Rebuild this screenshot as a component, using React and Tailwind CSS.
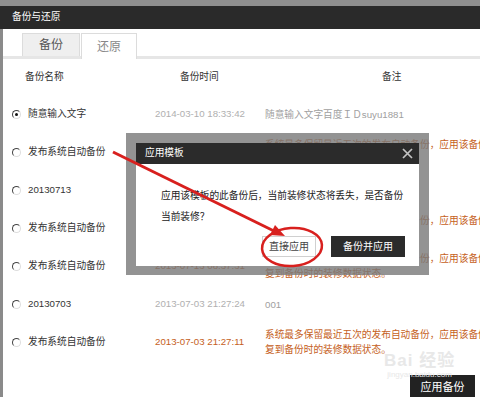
const rows = [
  {
    name: "随意输入文字",
    checked: true,
    time: "2014-03-10 18:33:42",
    tone: "gray",
    note: ["随意输入文字百度ＩＤsuyu1881"],
  },
  {
    name: "发布系统自动备份",
    time: "2013-07-20 09:12:45",
    tone: "orange",
    note: ["系统最多保留最近五次的发布自动备份，应用该备份将恢", "复到备份时的装修数据状态。"],
  },
  { name: "20130713", time: "2013-07-13 10:21:08", tone: "gray", note: ["0713"] },
  {
    name: "发布系统自动备份",
    time: "2013-07-15 08:40:02",
    tone: "orange",
    note: ["系统最多保留最近五次的发布自动备份，应用该备份将恢", "复到备份时的装修数据状态。"],
  },
  {
    name: "发布系统自动备份",
    time: "2013-07-13 08:37:31",
    tone: "orange",
    note: ["系统最多保留最近五次的发布自动备份，应用该备份将恢", "复到备份时的装修数据状态。"],
  },
  { name: "20130703", time: "2013-07-03 21:27:24", tone: "gray", note: ["001"] },
  {
    name: "发布系统自动备份",
    time: "2013-07-03 21:27:11",
    tone: "orange",
    note: ["系统最多保留最近五次的发布自动备份，应用该备份将恢", "复到备份时的装修数据状态。"],
  },
];

function Radio({ checked }) {
  return (
    <span className="w-[9px] h-[9px] shrink-0 rounded-full border border-t-[#444] border-l-[#444] border-r-[#ddd] border-b-[#ddd] bg-white flex items-center justify-center">
      {checked && <span className="w-[3px] h-[3px] rounded-full bg-[#111]" />}
    </span>
  );
}

function Row({ row }) {
  const orange = row.tone === "orange";
  return (
    <div className="h-[38px] flex items-center pl-[9px]">
      <Radio checked={row.checked} />
      <div className="w-[127px] ml-[7px] shrink-0 text-[#333] whitespace-nowrap">{row.name}</div>
      <div className={`w-[110px] shrink-0 whitespace-nowrap ${orange ? "text-[#c5601c]" : "text-[#b0b0b0]"}`}>
        {row.time}
      </div>
      <div className={`shrink-0 leading-[15px] whitespace-nowrap ${orange ? "text-[#c5601c]" : "text-[#a0a0a0]"}`}>
        {row.note.map((l, i) => (
          <div key={i}>{l}</div>
        ))}
      </div>
    </div>
  );
}

export default function App() {
  return (
    <div className="relative w-[480px] h-[397px] overflow-hidden bg-white text-[9.7px] font-['Liberation_Sans','Noto_Sans_CJK_SC',sans-serif]">
      <div className="h-[6px] bg-[#8f8f8f]" />
      <div className="h-[23px] bg-[#2a2a2a] flex items-center pl-[12px] text-white">备份与还原</div>

      <div className="flex">
        <div className="w-[3px] shrink-0 bg-[#8a8a8a]" />
        <div className="flex-1 min-w-0">
          {/* tabs */}
          <div className="h-[30px] flex items-end pl-[19px] border-b-[3px] border-[#e6e6e6]">
            <div className="w-[58px] h-[23px] bg-[#efefef] border border-b-0 border-[#dcdcdc] flex items-center justify-center text-[12px] text-[#555]">
              备份
            </div>
            <div className="w-[56px] h-[26px] ml-[1px] -mb-[3px] bg-white border border-b-0 border-[#dcdcdc] flex items-center justify-center text-[12px] text-[#888]">
              还原
            </div>
          </div>

          {/* column headers */}
          <div className="h-[36px] flex items-center pl-[22px] text-[#333]">
            <div className="w-[127px] shrink-0">备份名称</div>
            <div className="w-[110px] shrink-0 pl-[28px]">备份时间</div>
            <div className="pl-[120px]">备注</div>
          </div>

          {rows.map((r, i) => (
            <Row key={i} row={r} />
          ))}

          <div className="flex justify-end gap-[5px] mt-[14px] -mr-[60px]">
            <button className="w-[65px] h-[24px] shrink-0 bg-[#222] text-white text-[11px] flex items-center justify-center">
              应用备份
            </button>
            <button className="w-[60px] h-[24px] shrink-0 bg-white border border-[#ccc] text-[#333] text-[11px]">
              取消
            </button>
          </div>
        </div>
      </div>

      {/* watermark */}
      <div className="absolute left-[384px] top-[352px] flex flex-col items-center text-[#e8e8e8] pointer-events-none">
        <div className="text-[17px] font-bold leading-[18px] tracking-[1px]">Bai 经验</div>
        <div className="text-[8px] leading-[10px]">jingyan.baidu.com</div>
      </div>

      {/* modal */}
      <div className="absolute left-[126px] top-[133px] w-[303px] h-[142px] bg-[rgba(120,120,120,0.8)] pt-[10px] pl-[10px] pr-[10px] pb-[9px]">
        <div className="bg-white h-full flex flex-col">
          <div className="h-[21px] bg-[#2b2b2b] flex items-center justify-between pl-[9px] pr-[6px] text-white">
            <span>应用模板</span>
            <svg width="11" height="11" viewBox="0 0 11 11">
              <path d="M1 1L10 10M10 1L1 10" stroke="#c4c4c4" strokeWidth="1.7" />
            </svg>
          </div>
          <div className="pl-[25px] pt-[21px] leading-[21px] text-[#222]">
            <div>应用该模板的此备份后，当前装修状态将丢失，是否备份</div>
            <div>当前装修？</div>
          </div>
          <div className="flex justify-end gap-[15px] pr-[14px] mt-[9px]">
            <button className="w-[54px] h-[21px] bg-white border border-[#d0d0d0] text-[#444] text-[10px]">直接应用</button>
            <button className="w-[74px] h-[21px] bg-[#2b2b2b] text-white text-[10px]">备份并应用</button>
          </div>
        </div>
      </div>

      {/* red annotation */}
      <svg className="absolute left-0 top-0 pointer-events-none" width="480" height="397">
        <line x1="113" y1="152" x2="274" y2="231" stroke="#d8201e" strokeWidth="3" />
        <polygon points="285,236 270,235 275,225" fill="#d8201e" />
        <ellipse cx="292" cy="247" rx="30" ry="19" fill="none" stroke="#d8201e" strokeWidth="2.5" transform="rotate(-4 292 247)" />
      </svg>
    </div>
  );
}
